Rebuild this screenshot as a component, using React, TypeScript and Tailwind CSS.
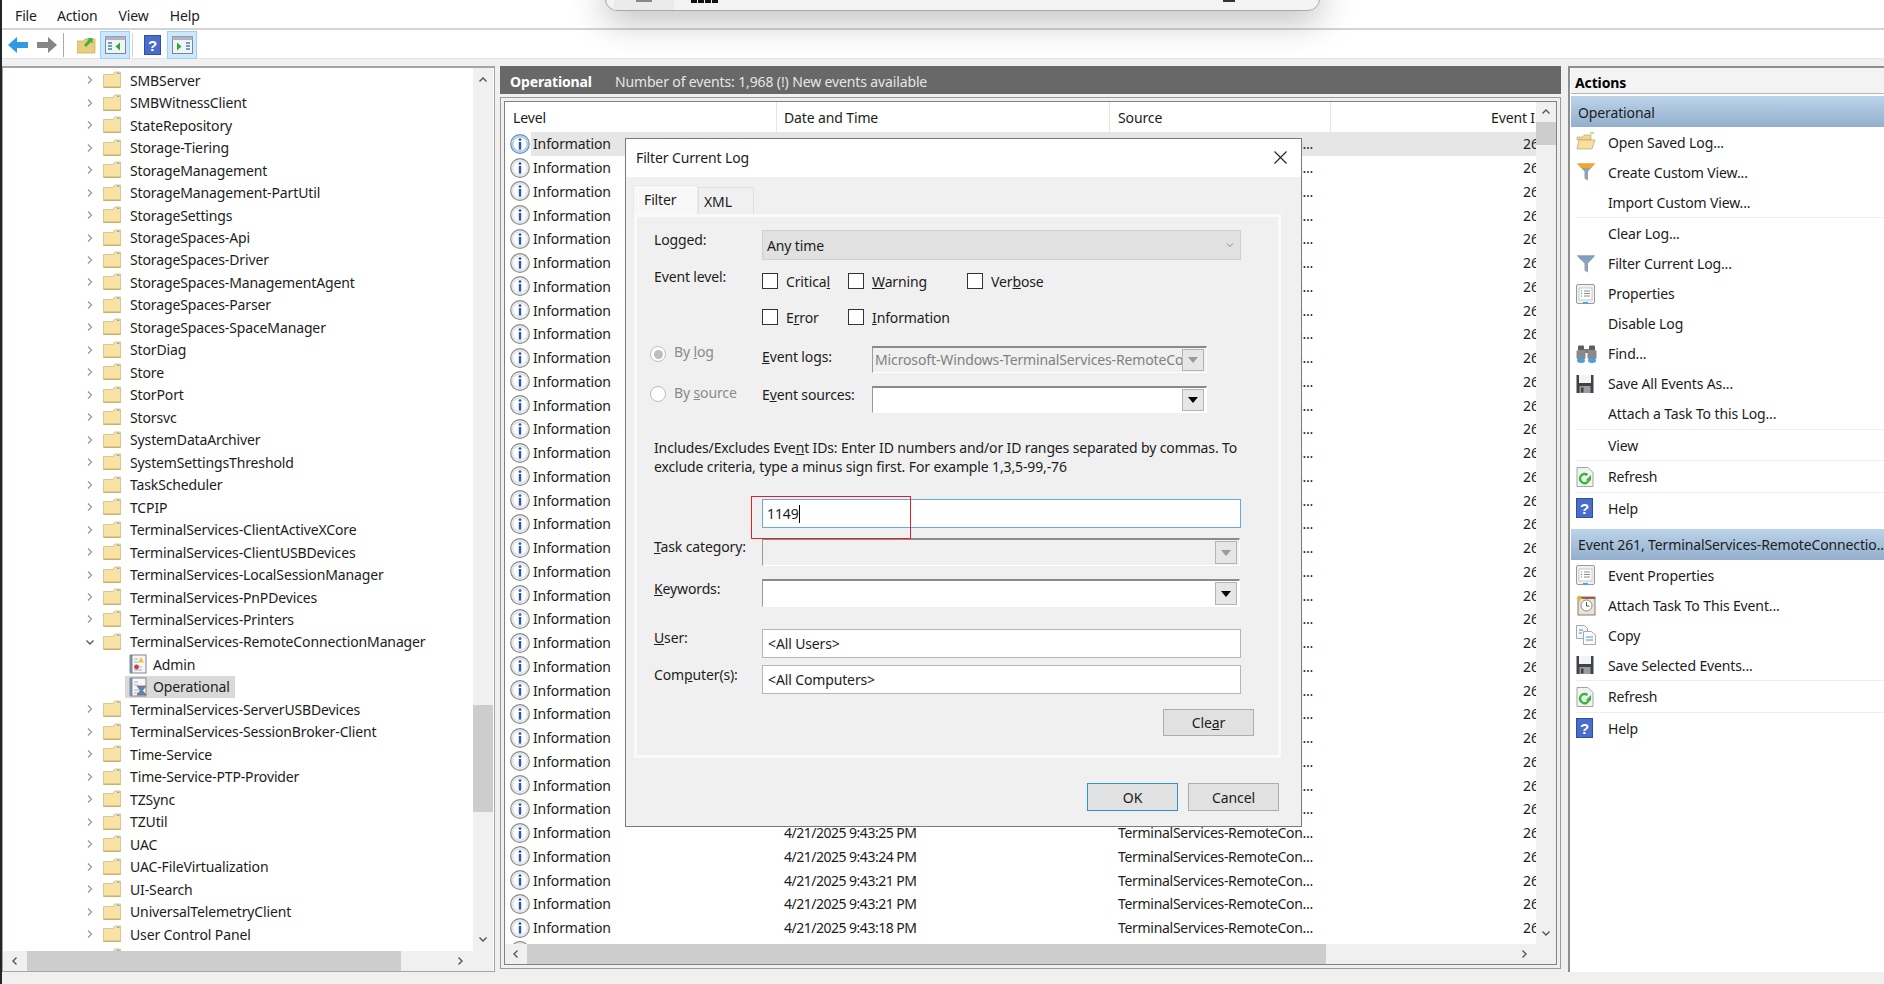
import React from "react";

const Chev = ({ open }: { open?: boolean }) => (
  <svg width="10" height="10" viewBox="0 0 10 10" fill="none" stroke={open ? "#555" : "#999"} strokeWidth="1.3">
    {open ? <path d="M1.5 3.5 5 7l3.5-3.5" /> : <path d="M3 1.5 6.5 5 3 8.5" />}
  </svg>
);

const Folder = () => (
  <svg width="18" height="18" viewBox="0 0 18 18" className="shrink-0">
    <path d="M.5 3.5h10l1-2.5h6v15.5H.5z" fill="#f8e2a4" stroke="#d2bc85" strokeWidth="0.8" />
    <path d="M1 15.5h16.5v1.5H.5z" fill="#c9b06e" />
    <rect x="14" y="1.6" width="2.4" height="1.4" fill="#6db3e8" />
  </svg>
);

const LogIcon = ({ kind }: { kind: "admin" | "op" }) => (
  <svg width="18" height="20" viewBox="0 0 18 20" className="shrink-0">
    <rect x="1.5" y="1" width="15.5" height="18" fill="#f7f7f7" stroke="#7c8794" />
    <rect x="0.5" y="1" width="3" height="18" fill="#7d8ea3" />
    <path d="M5 5h4M5 8h4M5 13h8M5 16h8" stroke="#9db2cc" strokeWidth="1" />
    {kind === "admin" ? (
      <>
        <path d="M12 3l3 5.5H9z" fill="#f1c62e" />
        <circle cx="7.5" cy="13" r="2.4" fill="#d63a3a" />
      </>
    ) : (
      <path d="M8 9h9l-3.5 4.5L17 18H8l3.5-4.5z" fill="#3a8fd8" stroke="#c8511b" strokeWidth="0.8" />
    )}
  </svg>
);

const Info = ({ active }: { active?: boolean }) => (
  <svg width="20" height="20" viewBox="0 0 20 20" className="shrink-0">
    <circle cx="10" cy="10" r="9.3" fill={active ? "#cfe0f3" : "#f2f2f2"} stroke={active ? "#5f8fc4" : "#8a8a8a"} strokeWidth="1.2" />
    <circle cx="10" cy="10" r="7.2" fill="#fff" stroke={active ? "#8cb3dc" : "#cfd6de"} strokeWidth="0.9" />
    <circle cx="10" cy="5.6" r="1.4" fill="#2a57b8" />
    <rect x="8.8" y="8" width="2.4" height="7.6" fill="#2a57b8" />
  </svg>
);

const HelpIcon = ({ w = 17, h = 20 }: { w?: number; h?: number }) => (
  <svg width={w} height={h} viewBox="0 0 17 20" className="shrink-0">
    <rect width="17" height="20" fill="#2f4ea8" />
    <rect x="1" y="1" width="15" height="18" fill="#4a6ccb" />
    <text x="8.5" y="15.5" fontSize="15" fontWeight="700" fill="#fff" textAnchor="middle" fontFamily="Liberation Sans">?</text>
  </svg>
);

const Funnel = ({ top, body }: { top: string; body: string }) => (
  <svg width="20" height="20" viewBox="0 0 20 20" className="shrink-0">
    <path d="M1 1.5h18l-7 8v9l-3.5-2V9.5z" fill={body} />
    <path d="M1 1.5h18l-4 4.5H5z" fill={top} />
  </svg>
);

const OpenFolder = () => (
  <svg width="20" height="20" viewBox="0 0 20 20" className="shrink-0">
    <path d="M1 5h6l1-2h7v5H1z" fill="#f2d48a" stroke="#b9a26a" strokeWidth="0.6" />
    <path d="M1 17 3 8h16l-3 9z" fill="#f7dfa0" stroke="#b9a26a" strokeWidth="0.7" />
    <path d="M14 1h4" stroke="#4ed14e" />
  </svg>
);

const Props = () => (
  <svg width="20" height="20" viewBox="0 0 20 20" className="shrink-0">
    <rect x="0.5" y="0.5" width="18" height="19" rx="1.5" fill="#f1f1f1" stroke="#9a9a9a" />
    <rect x="3" y="4" width="13" height="12" fill="#fff" stroke="#b5b5b5" strokeWidth="0.7" />
    <path d="M5 7h1M5 9.5h1M5 12h1" stroke="#3a8fd8" />
    <path d="M8 7h6M8 9.5h6M8 12h6" stroke="#8a8a8a" />
    <rect x="7" y="18" width="5" height="1.6" fill="#36a8e6" />
  </svg>
);

const Binoc = () => (
  <svg width="21" height="20" viewBox="0 0 21 20" className="shrink-0">
    <rect x="2" y="1.5" width="6" height="6" rx="1" fill="#5e5e5e" />
    <rect x="13" y="1.5" width="6" height="6" rx="1" fill="#5e5e5e" />
    <rect x="8" y="5" width="5" height="4" fill="#777" />
    <rect x="0.5" y="6" width="9" height="9" rx="1.5" fill="#8a8a8a" />
    <rect x="11.5" y="6" width="9" height="9" rx="1.5" fill="#8a8a8a" />
    <ellipse cx="5" cy="16.5" rx="4" ry="2.5" fill="#4a9fe0" />
    <ellipse cx="16" cy="16.5" rx="4" ry="2.5" fill="#4a9fe0" />
  </svg>
);

const Floppy = () => (
  <svg width="18" height="20" viewBox="0 0 18 20" className="shrink-0">
    <path d="M.5 1h17v18H.5z" fill="#3f4347" />
    <rect x="3" y="1" width="12" height="8" fill="#f4f4f4" />
    <rect x="3.5" y="12" width="11" height="7" fill="#9a9ea2" />
    <rect x="5" y="13.5" width="2.5" height="5" fill="#3f4347" />
  </svg>
);

const RefreshIco = () => (
  <svg width="18" height="20" viewBox="0 0 18 20" className="shrink-0">
    <path d="M1 .5h11l5 5v14H1z" fill="#f2f2f2" stroke="#a5a5a5" />
    <path d="M13 13a4.6 4.6 0 1 1-1.5-5" fill="none" stroke="#35b83a" strokeWidth="2.4" />
    <path d="M9.5 13.5h5.5V8z" fill="#35b83a" />
  </svg>
);

const ClockIco = () => (
  <svg width="20" height="21" viewBox="0 0 20 21" className="shrink-0">
    <rect x="2" y="2" width="17" height="18" fill="#e7e2da" stroke="#8b7d6d" />
    <rect x="2" y="2" width="17" height="2" fill="#9c5e3e" />
    <circle cx="10.5" cy="10.5" r="5.5" fill="#fff" stroke="#8a8a8a" />
    <path d="M10.5 7v4h3" stroke="#555" fill="none" />
    <path d="M3.5 0l1 2.5L7 3.5 4.5 4.5 3.5 7l-1-2.5L0 3.5l2.5-1z" fill="#f3b62c" />
  </svg>
);

const CopyIco = () => (
  <svg width="20" height="20" viewBox="0 0 20 20" className="shrink-0">
    <path d="M.5.5h8l3 3v10H.5z" fill="#f7f7f7" stroke="#a9a9a9" />
    <path d="M7.5 6.5h8l4 3.5v9.5h-12z" fill="#fbfbfb" stroke="#a9a9a9" />
    <path d="M3 5h4M3 8h3" stroke="#4a90d9" />
    <path d="M10 12h7M10 15h7" stroke="#4a90d9" />
  </svg>
);

const tree: [string, number?][] = [
  ["SMBServer"], ["SMBWitnessClient"], ["StateRepository"], ["Storage-Tiering"], ["StorageManagement"],
  ["StorageManagement-PartUtil"], ["StorageSettings"], ["StorageSpaces-Api"], ["StorageSpaces-Driver"],
  ["StorageSpaces-ManagementAgent"], ["StorageSpaces-Parser"], ["StorageSpaces-SpaceManager"], ["StorDiag"],
  ["Store"], ["StorPort"], ["Storsvc"], ["SystemDataArchiver"], ["SystemSettingsThreshold"], ["TaskScheduler"],
  ["TCPIP"], ["TerminalServices-ClientActiveXCore"], ["TerminalServices-ClientUSBDevices"],
  ["TerminalServices-LocalSessionManager"], ["TerminalServices-PnPDevices"], ["TerminalServices-Printers"],
  ["TerminalServices-RemoteConnectionManager", 1], ["Admin", 2], ["Operational", 3],
  ["TerminalServices-ServerUSBDevices"], ["TerminalServices-SessionBroker-Client"], ["Time-Service"],
  ["Time-Service-PTP-Provider"], ["TZSync"], ["TZUtil"], ["UAC"], ["UAC-FileVirtualization"], ["UI-Search"],
  ["UniversalTelemetryClient"], ["User Control Panel"], [""],
];

const lastDates = ["4/21/2025 9:43:25 PM", "4/21/2025 9:43:24 PM", "4/21/2025 9:43:21 PM", "4/21/2025 9:43:21 PM", "4/21/2025 9:43:18 PM"];
const rows = Array.from({ length: 35 }, (_, i) => (i >= 29 && i < 34 ? lastDates[i - 29] : i === 34 ? "" : "4/21/2025 9:43:30 PM"));

type Act = { t: string; icon?: React.ReactNode; sep?: boolean };
const actions1: Act[] = [
  { t: "Open Saved Log...", icon: <OpenFolder /> },
  { t: "Create Custom View...", icon: <Funnel top="#f5a623" body="#8fa3b8" /> },
  { t: "Import Custom View...", sep: true },
  { t: "Clear Log..." },
  { t: "Filter Current Log...", icon: <Funnel top="#7f9fc0" body="#8fa3b8" /> },
  { t: "Properties", icon: <Props /> },
  { t: "Disable Log" },
  { t: "Find...", icon: <Binoc /> },
  { t: "Save All Events As...", icon: <Floppy /> },
  { t: "Attach a Task To this Log...", sep: true },
  { t: "View", sep: true },
  { t: "Refresh", icon: <RefreshIco />, sep: true },
  { t: "Help", icon: <HelpIcon /> },
];
const actions2: Act[] = [
  { t: "Event Properties", icon: <Props /> },
  { t: "Attach Task To This Event...", icon: <ClockIco /> },
  { t: "Copy", icon: <CopyIco /> },
  { t: "Save Selected Events...", icon: <Floppy />, sep: true },
  { t: "Refresh", icon: <RefreshIco />, sep: true },
  { t: "Help", icon: <HelpIcon /> },
];

const ActionList = ({ items }: { items: Act[] }) => (
  <div className="flex flex-col">
    {items.map((a) => (
      <div key={a.t + a.sep}>
        <div className="flex h-[30px] items-center">
          <div className="flex w-[32px] shrink-0">{a.icon}</div>
          <span className="whitespace-nowrap">{a.t}</span>
        </div>
        {a.sep && <div className="h-[1px] mb-[0.5px] bg-[#eeeeee]" />}
      </div>
    ))}
  </div>
);

const Arrow = ({ d }: { d: string }) => (
  <svg width="10" height="10" viewBox="0 0 10 10" fill="none" stroke="#555" strokeWidth="1.4"><path d={d} /></svg>
);
const UP = "M1.5 6.5 5 3l3.5 3.5";
const DOWN = "M1.5 3.5 5 7l3.5-3.5";
const LEFT = "M6.5 1.5 3 5l3.5 3.5";
const RIGHT = "M3.5 1.5 7 5 3.5 8.5";

const Triangle = ({ color }: { color: string }) => (
  <svg width="10" height="6" viewBox="0 0 10 6"><path d="M0 0h10L5 6z" fill={color} /></svg>
);

const InsetCombo = ({ w, h, text, disabled }: { w: string; h: string; text?: string; disabled?: boolean }) => (
  <div className={`${w} ${h} flex items-stretch border-t-[2px] border-l border-t-[#8a8a8a] border-l-[#9a9a9a] border-r border-b border-r-white border-b-white ${disabled ? "bg-[#f0f0f0]" : "bg-white"}`}>
    <div className="flex-1 min-w-0 overflow-hidden whitespace-nowrap pl-[2px] pb-[2px] text-[#808080] flex items-center">{text}</div>
    <div className="w-[22px] my-[1px] mr-[2px] flex items-center justify-center border border-[#b4b4b4] bg-[#e6e6e6] shrink-0">
      <Triangle color={disabled ? "#9a9a9a" : "#000"} />
    </div>
  </div>
);

const Check = ({ children, w }: { children: React.ReactNode; w: string }) => (
  <div className={`${w} flex items-center gap-[8px] shrink-0`}>
    <div className="w-[16px] h-[16px] border border-[#333] bg-white shrink-0" />
    <span className="leading-none whitespace-nowrap pt-[1px]">{children}</span>
  </div>
);

const Radio = ({ checked }: { checked?: boolean }) => (
  <div className="w-[16px] h-[16px] rounded-full border border-[#bdbdbd] bg-white flex items-center justify-center shrink-0">
    {checked && <div className="w-[9px] h-[9px] rounded-full bg-[#bdbdbd]" />}
  </div>
);

const Btn = ({ children, primary }: { children: React.ReactNode; primary?: boolean }) => (
  <div className={`w-[91px] h-[28px] flex items-center justify-center bg-[#e1e1e1] border ${primary ? "border-[#2f8fe0]" : "border-[#adadad]"}`}>{children}</div>
);

const TextBox = ({ children }: { children?: React.ReactNode }) => (
  <div className="w-[479px] h-[29px] border border-[#b5b5b5] bg-white flex items-center pl-[5px]">{children}</div>
);

export default function App() {
  return (
    <div className="relative w-[1884px] h-[984px] overflow-hidden bg-[#f0f0f0] text-[#1c1c1c] text-[14px] tracking-[-0.13px] font-['Noto_Sans',sans-serif] border-l-2 border-l-[#20252b]">
      {/* menu */}
      <div className="h-[28px] bg-white flex items-center pl-[13px] pt-[3px] gap-[20px]">
        <span>File</span>
        <span>Action</span>
        <span className="ml-[1px]">View</span>
        <span className="ml-[1px]">Help</span>
      </div>
      <div className="h-[2px] bg-[#d4d4d4]" />
      {/* toolbar */}
      <div className="h-[29px] bg-white border-b border-[#e4e4e4] flex items-center pt-[1px]">
        <div className="ml-[6px] flex items-center gap-[9px]">
          <svg width="20" height="18" viewBox="0 0 20 18"><path d="M0 9 9 1v5h11v6H9v5z" fill="#2f9be6" /></svg>
          <svg width="20" height="18" viewBox="0 0 20 18"><path d="M20 9 11 1v5H0v6h11v5z" fill="#868686" /></svg>
        </div>
        <div className="w-[1px] h-[24px] bg-[#a9a9a9] ml-[6px]" />
        <div className="ml-[13px]">
          <svg width="19" height="18" viewBox="0 0 19 18">
            <path d="M0 5h7l1-2h10v14H0z" fill="#e9cf7d" stroke="#b99d4c" strokeWidth="0.6" />
            <path d="M7 9 12 3 9.5 2h6v6L14 6l-5 5z" fill="#46b143" />
          </svg>
        </div>
        <div className="ml-[4px] w-[30px] h-[28px] bg-[#cce8ff] border border-[#99d1ff] flex items-center justify-center">
          <svg width="21" height="18" viewBox="0 0 21 18">
            <rect x="0.5" y="0.5" width="20" height="17" fill="#f1f4f6" stroke="#7e8891" />
            <rect x="0.5" y="0.5" width="20" height="3.5" fill="#aeb7bf" />
            <path d="M3 7h4M3 10h4M3 13h4" stroke="#4f7fb0" strokeWidth="1.4" />
            <path d="M15 6.5v8L10.5 10.5z" fill="#2fa836" />
          </svg>
        </div>
        <div className="w-[1px] h-[24px] bg-[#d4d4d4] ml-[2px]" />
        <div className="ml-[11px]"><HelpIcon w={17} h={20} /></div>
        <div className="ml-[6px] w-[30px] h-[28px] bg-[#cce8ff] border border-[#99d1ff] flex items-center justify-center">
          <svg width="21" height="18" viewBox="0 0 21 18">
            <rect x="0.5" y="0.5" width="20" height="17" fill="#f1f4f6" stroke="#7e8891" />
            <rect x="0.5" y="0.5" width="20" height="3.5" fill="#aeb7bf" />
            <path d="M14 7h4M14 10h4M14 13h4" stroke="#4f7fb0" strokeWidth="1.4" />
            <path d="M5 6.5v8l4.5-4z" fill="#2fa836" />
          </svg>
        </div>
      </div>

      {/* main */}
      <div className="flex items-start mt-[7px] h-[906px]">
        {/* tree panel */}
        <div className="w-[493px] h-[906px] border border-[#a5a5a5] border-t-2 bg-white flex flex-col shrink-0">
          <div className="flex h-[883px]">
            <div className="flex-1 overflow-hidden pt-[1px]">
              {tree.map(([name, kind], i) => (
                <div key={i} className={`h-[22.48px] flex items-center whitespace-nowrap ${kind === 2 || kind === 3 ? "pl-[122px]" : "pl-[82px]"}`}>
                  {kind === 2 || kind === 3 ? (
                    <div className={`flex items-center gap-[6px] h-[22.48px] pl-[4px] pr-[5px] ${kind === 3 ? "bg-[#d9d9d9]" : ""}`}>
                      <LogIcon kind={kind === 2 ? "admin" : "op"} />
                      <span>{name}</span>
                    </div>
                  ) : (
                    <>
                      <div className="w-[18px] shrink-0"><Chev open={kind === 1} /></div>
                      <Folder />
                      <span className="ml-[9px]">{name}</span>
                    </>
                  )}
                </div>
              ))}
            </div>
            <div className="w-[20px] mr-[1px] bg-[#f0f0f0] flex flex-col shrink-0 items-center relative">
              <div className="h-[24px] flex items-center"><Arrow d={UP} /></div>
              <div className="flex-1 w-full pt-[613px] pb-[115px]"><div className="h-full w-full bg-[#cdcdcd]" /></div>
              <div className="h-[24px] flex items-center"><Arrow d={DOWN} /></div>
            </div>
          </div>
          <div className="h-[20px] mr-[1px] bg-[#f0f0f0] flex items-center">
            <div className="w-[24px] flex justify-center"><Arrow d={LEFT} /></div>
            <div className="w-[374px] h-full bg-[#cdcdcd]" />
            <div className="flex-1 flex justify-end pr-[28px]"><Arrow d={RIGHT} /></div>
          </div>
        </div>

        {/* center */}
        <div className="ml-[5px] w-[1061px] shrink-0 flex flex-col">
          <div className="h-[28px] bg-[#686868] text-[#e6e6e6] flex items-center pl-[10px] pt-[2px]">
            <span className="font-bold text-white">Operational</span>
            <span className="ml-[23px]">Number of events: 1,968 (!) New events available</span>
          </div>
          <div className="mt-[3px] h-[872px] border border-[#9a9a9a] p-[3px] bg-[#f0f0f0]">
            <div className="h-full border border-[#808080] bg-white flex flex-col">
              <div className="flex flex-1 min-h-0">
                <div className="w-[1031px] overflow-hidden shrink-0">
                  <div className="flex h-[30px] items-center">
                    <div className="w-[272px] h-full pl-[8px] flex items-center border-r border-[#e5e5e5] shrink-0">Level</div>
                    <div className="w-[333px] h-full pl-[7px] flex items-center border-r border-[#e5e5e5] shrink-0">Date and Time</div>
                    <div className="w-[221px] h-full pl-[8px] flex items-center border-r border-[#e5e5e5] shrink-0">Source</div>
                    <div className="pl-[160px] whitespace-nowrap shrink-0">Event ID</div>
                  </div>
                  {rows.map((d, i) => (
                    <div key={i} className="flex h-[23.75px] items-center whitespace-nowrap">
                      <div className="w-[26px] pl-[5px] shrink-0"><Info active={i === 0} /></div>
                      <div className={`flex flex-1 h-full items-center ${i === 0 ? "bg-[#e6e6e6]" : ""}`}>
                        <div className="w-[246px] pl-[2px] shrink-0">Information</div>
                        <div className="w-[333px] pl-[7px] shrink-0 tracking-[-0.5px]">{d}</div>
                        <div className="w-[221px] pl-[8px] shrink-0 tracking-[-0.3px]">TerminalServices-RemoteCon...</div>
                        <div className="pl-[192px]">261</div>
                      </div>
                    </div>
                  ))}
                </div>
                <div className="w-[20px] bg-[#f0f0f0] flex flex-col items-center shrink-0">
                  <div className="h-[20px] flex items-center"><Arrow d={UP} /></div>
                  <div className="w-full h-[23px] bg-[#cdcdcd]" />
                  <div className="flex-1" />
                  <div className="h-[22px] flex items-center"><Arrow d={DOWN} /></div>
                </div>
              </div>
              <div className="h-[20px] bg-[#f0f0f0] flex items-center shrink-0">
                <div className="w-[22px] flex justify-center"><Arrow d={LEFT} /></div>
                <div className="w-[799px] h-full bg-[#cdcdcd]" />
                <div className="flex-1 pl-[193px]"><Arrow d={RIGHT} /></div>
              </div>
            </div>
          </div>
        </div>

        {/* actions */}
        <div className="ml-[7px] flex-1 h-[906px] border-l-[2px] border-t-2 border-[#8e8e8e] pl-[1px] flex flex-col bg-white">
          <div className="h-[26px] bg-[#f3f3f3] border-b border-[#b5b5b5] flex items-center pl-[4px] pt-[3px] font-bold text-black">Actions</div>
          <div className="h-[31px] mt-[2px] bg-gradient-to-b from-[#bcd4ea] to-[#93afcd] flex items-center pl-[7px] pt-[1px]">Operational</div>
          <div className="pl-[5px]"><ActionList items={actions1} /></div>
          <div className="h-[31px] mt-[6px] bg-gradient-to-b from-[#bcd4ea] to-[#93afcd] flex items-center pl-[7px] whitespace-nowrap overflow-hidden">Event 261, TerminalServices-RemoteConnectio...</div>
          <div className="pl-[5px]"><ActionList items={actions2} /></div>
        </div>
      </div>

      {/* notification fragment */}
      <div className="absolute left-[603px] -top-[20px] w-[715px] h-[31px] rounded-b-[12px] bg-[#f3f3f3] border border-[#a8a8a8] shadow-[0_8px_36px_rgba(0,0,0,0.3)] flex">
        <div className="ml-[8px] w-[60px] h-full bg-[#ebebeb] flex items-end justify-center pb-[8px]">
          <div className="w-[16px] h-[2px] bg-[#888]" />
        </div>
        <div className="ml-[17px] flex h-full items-end pb-[7px] gap-[1px]">
          <div className="w-[6px] h-[3px] bg-[#111]" />
          <div className="w-[6px] h-[3px] bg-[#111]" />
          <div className="w-[6px] h-[3px] bg-[#111]" />
          <div className="w-[6px] h-[3px] bg-[#111]" />
        </div>
        <div className="ml-[505px] flex items-end pb-[8px]"><div className="w-[12px] h-[2px] bg-[#333]" /></div>
      </div>

      {/* dialog */}
      <div className="absolute left-[623px] top-[138px] w-[677px] h-[689px] bg-[#f0f0f0] border border-[#7a7a7a] flex flex-col">
        <div className="h-[38px] bg-white flex items-center justify-between pl-[10px] pr-[14px] pb-[1px] shrink-0">
          <span>Filter Current Log</span>
          <svg width="13" height="13" viewBox="0 0 13 13" stroke="#222" strokeWidth="1.1"><path d="M.5.5l12 12M12.5.5l-12 12" /></svg>
        </div>
        <div className="flex items-end pl-[7px] h-[37px] shrink-0 relative z-10">
          <div className="w-[65px] h-[29px] bg-[#f8f8f8] border border-[#e8e8e8] border-b-0 pl-[10px] pb-[1px] flex items-center">Filter</div>
          <div className="w-[56px] h-[27px] border border-[#e0e0e0] border-b-0 pl-[5px] flex items-center">XML</div>
        </div>
        <div className="mx-[8px] w-[647px] h-[544px] border-[3px] border-[#fafafa] bg-[#f0f0f0] flex flex-col relative">
          <div className="pl-[17px] mt-[13px] flex items-start">
            <div className="w-[108px] -mt-[1px]">Lo<u>g</u>ged:</div>
            <div className="w-[479px] h-[30px] bg-[#e1e1e1] border border-[#cfcfcf] flex items-center justify-between pl-[4px] pr-[6px]">
              <span className="pt-[1px]">Any time</span>
              <svg width="8" height="6" viewBox="0 0 8 6" fill="none" stroke="#888"><path d="M1 1.5 4 4.5 7 1.5" /></svg>
            </div>
          </div>
          <div className="pl-[17px] mt-[13px] flex items-start h-[54px]">
            <div className="w-[108px] -mt-[7px]">Event level:</div>
            <div className="flex flex-col gap-[20px]">
              <div className="flex h-[16px]">
                <Check w="w-[86px]">Critica<u>l</u></Check>
                <Check w="w-[119px]"><u>W</u>arning</Check>
                <Check w="w-[100px]">Ver<u>b</u>ose</Check>
              </div>
              <div className="flex h-[16px]">
                <Check w="w-[86px]">E<u>r</u>ror</Check>
                <Check w="w-[119px]"><u>I</u>nformation</Check>
              </div>
            </div>
          </div>
          <div className="pl-[13px] mt-[19px] flex items-start h-[27px]">
            <Radio checked />
            <div className="ml-[8px] w-[88px] -mt-[5px] text-[#8a8a8a]">By <u>l</u>og</div>
            <div className="w-[110px]"><u>E</u>vent logs:</div>
            <InsetCombo w="w-[335px]" h="h-[27px]" text="Microsoft-Windows-TerminalServices-RemoteConnectionManager/Operational" disabled />
          </div>
          <div className="pl-[13px] mt-[13px] flex items-start h-[27px]">
            <Radio />
            <div className="ml-[8px] w-[88px] -mt-[4px] text-[#8a8a8a]">By <u>s</u>ource</div>
            <div className="w-[110px] -mt-[2px]">E<u>v</u>ent sources:</div>
            <InsetCombo w="w-[335px]" h="h-[27px]" />
          </div>
          <div className="ml-[17px] mt-[25px] w-[590px] h-[38px] leading-[19px]">
            Includes/Excludes Eve<u>n</u>t IDs: Enter ID numbers and/or ID ranges separated by commas. To exclude criteria, type a minus sign first. For example 1,3,5-99,-76
          </div>
          <div className="ml-[125px] mt-[23px] w-[479px] h-[29px] border border-[#64a9e6] bg-white flex items-center pl-[4px]">
            <span>1149</span><span className="w-[1px] h-[18px] bg-black" />
          </div>
          <div className="pl-[17px] mt-[10px] flex items-start h-[28px]">
            <div className="w-[108px] -mt-[2px]"><u>T</u>ask category:</div>
            <InsetCombo w="w-[478px]" h="h-[28px]" disabled />
          </div>
          <div className="pl-[17px] mt-[13px] flex items-start h-[28px]">
            <div className="w-[108px] -mt-[1px]"><u>K</u>eywords:</div>
            <InsetCombo w="w-[478px]" h="h-[28px]" />
          </div>
          <div className="pl-[17px] mt-[22px] flex items-start">
            <div className="w-[108px] -mt-[2px]"><u>U</u>ser:</div>
            <TextBox>&lt;All Users&gt;</TextBox>
          </div>
          <div className="pl-[17px] mt-[7px] flex items-start">
            <div className="w-[108px] -mt-[1px]">Com<u>p</u>uter(s):</div>
            <TextBox>&lt;All Computers&gt;</TextBox>
          </div>
          <div className="mt-[15px] flex justify-end pr-[24px]">
            <div className="w-[91px] h-[27px] flex items-center justify-center bg-[#e1e1e1] border border-[#adadad]">Cle<u>a</u>r</div>
          </div>
          {/* annotation */}
          <div className="absolute left-[114px] top-[279px] w-[160px] h-[43px] border border-[#e0202a]" />
        </div>
        <div className="mt-[25px] flex justify-end gap-[10px] pr-[22px]">
          <Btn primary>OK</Btn>
          <Btn>Cancel</Btn>
        </div>
      </div>
    </div>
  );
}
